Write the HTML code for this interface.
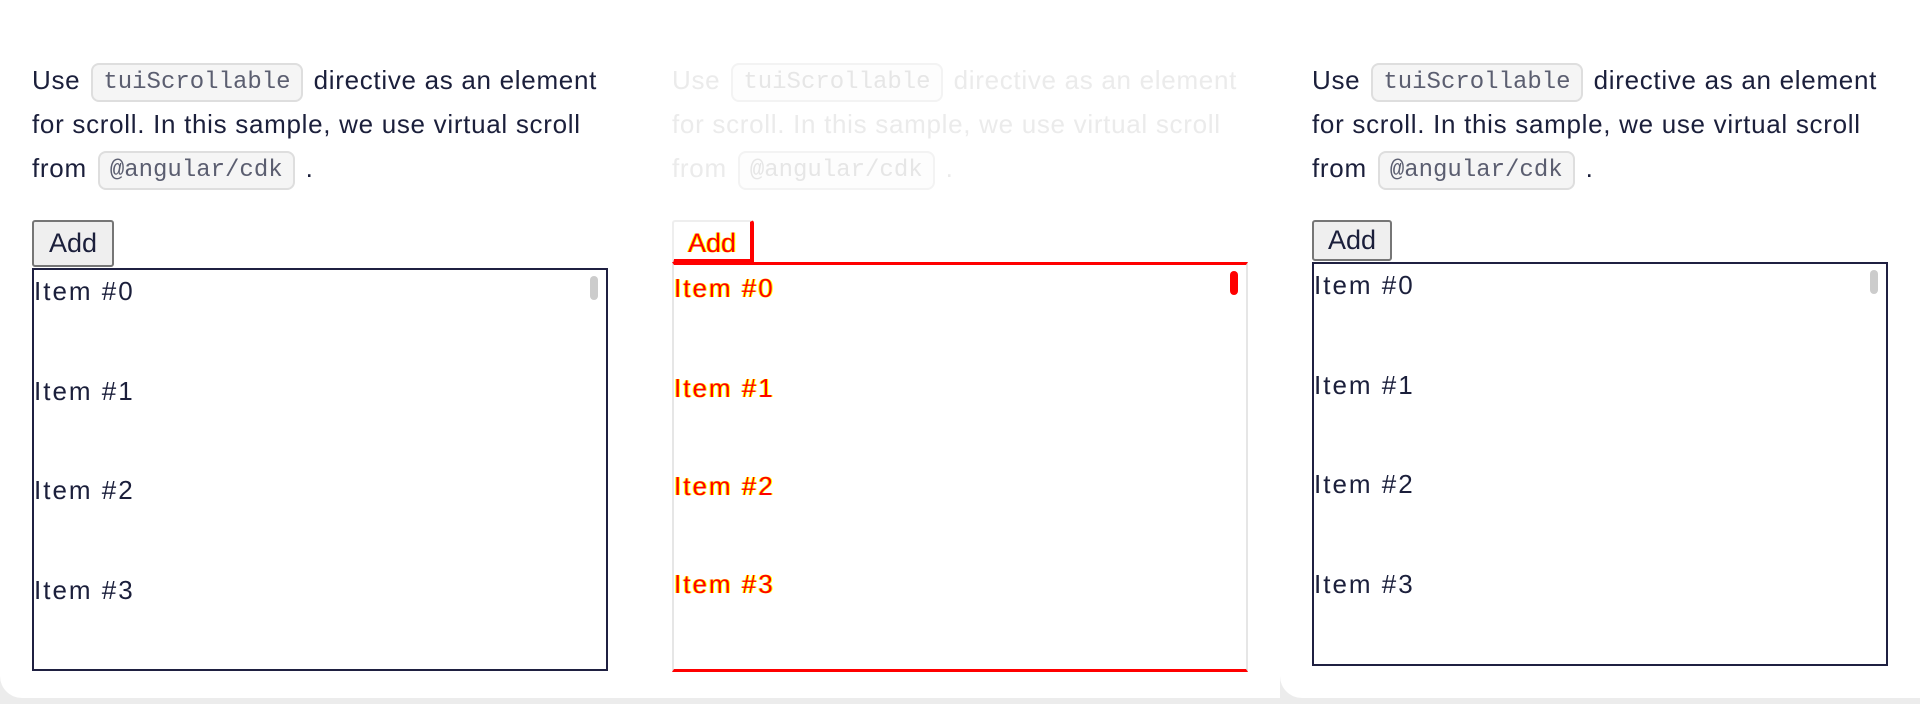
<!DOCTYPE html>
<html><head><meta charset="utf-8"><style>
*{margin:0;padding:0;box-sizing:border-box}
html,body{width:1920px;height:704px;overflow:hidden;background:#ececec;font-family:"Liberation Sans",sans-serif;color:#1b1f3b}
.card{position:absolute;top:0;width:640px;height:698px;background:#fff;border-radius:0 0 0 22px}
.txt{position:absolute;left:32px;top:58px;width:620px;font-size:26px;letter-spacing:0.7px;line-height:44px;white-space:nowrap}
.code{display:inline-block;font-family:"Liberation Mono",monospace;font-size:24px;letter-spacing:0;color:#5b5e70;background:#f5f5f5;border:2px solid #dedede;border-radius:8px;padding:0 10px;line-height:35px;margin:0 11px;vertical-align:middle}
.btn{position:absolute;left:32px;font-size:27px;background:#efefef;border:2px solid #767676;border-radius:3px;text-align:center}
.box{position:absolute;left:32px;width:576px;border:2px solid #1f2041;background:#fff}
.it{position:absolute;left:0;font-size:26px;letter-spacing:2px;line-height:30px}
.sb{position:absolute;right:8px;top:6px;width:8px;height:24px;background:#ccc;border-radius:4px}
.faded{color:#ebebeb}
.faded .code{color:#e6e6e6;background:#fdfdfd;border-color:#f3f3f3}
.red{color:#f00;text-shadow:1px 0 #ff0,-1px 0 #ff0}
</style></head><body>
<div class="card" style="left:0">
 <div class="txt">Use<span class="code">tuiScrollable</span>directive as an element<br>for scroll. In this sample, we use virtual scroll<br>from<span class="code">@angular/cdk</span>.</div>
 <div class="btn" style="top:220px;width:82px;height:47px;line-height:43px">Add</div>
 <div class="box" style="top:268px;height:403px">
  <div class="sb"></div>
  <div class="it" style="top:6px">Item #0</div>
  <div class="it" style="top:106px">Item #1</div>
  <div class="it" style="top:205px">Item #2</div>
  <div class="it" style="top:305px">Item #3</div>
 </div>
</div>
<div class="card faded" style="left:640px;border-radius:0">
 <div class="txt">Use<span class="code">tuiScrollable</span>directive as an element<br>for scroll. In this sample, we use virtual scroll<br>from<span class="code">@angular/cdk</span>.</div>
 <div class="btn red" style="top:220px;width:82px;height:47px;line-height:43px;background:#fff;border:2px solid #eee;border-right:4px solid #f00;border-bottom:8px solid #f00">Add</div>
 <div class="box" style="top:262px;height:410px;border:2px solid #e6e6e6;border-top:3px solid #f00;border-bottom:3px solid #f00">
  <div class="sb" style="background:#f00;width:8px"></div>
  <div class="it red" style="top:8px">Item #0</div>
  <div class="it red" style="top:108px">Item #1</div>
  <div class="it red" style="top:206px">Item #2</div>
  <div class="it red" style="top:304px">Item #3</div>
 </div>
</div>
<div class="card" style="left:1280px">
 <div class="txt">Use<span class="code">tuiScrollable</span>directive as an element<br>for scroll. In this sample, we use virtual scroll<br>from<span class="code">@angular/cdk</span>.</div>
 <div class="btn" style="top:220px;width:80px;height:41px;line-height:37px">Add</div>
 <div class="box" style="top:262px;height:404px">
  <div class="sb"></div>
  <div class="it" style="top:6px">Item #0</div>
  <div class="it" style="top:106px">Item #1</div>
  <div class="it" style="top:205px">Item #2</div>
  <div class="it" style="top:305px">Item #3</div>
 </div>
</div>
</body></html>
